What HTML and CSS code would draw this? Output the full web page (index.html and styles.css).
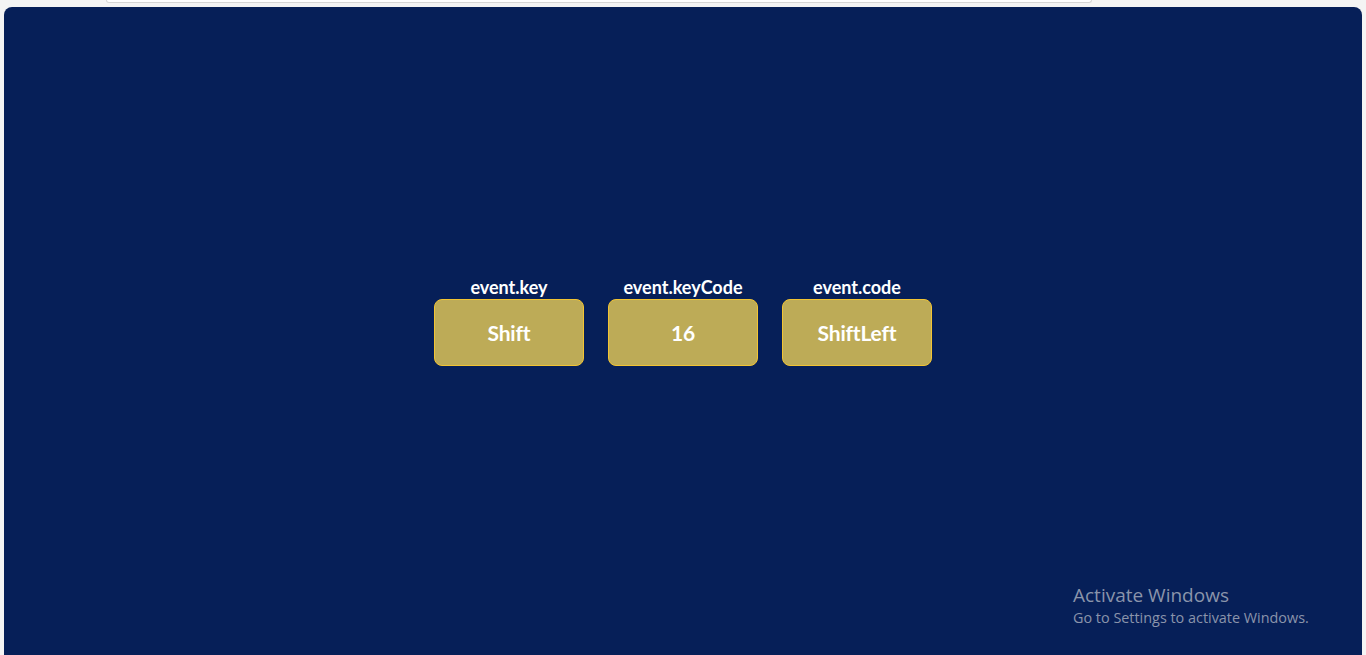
FILE: index.html
```html
<!DOCTYPE html>
<html>
<head>
<meta charset="utf-8">
<link rel="stylesheet" href="styles.css">
</head>
<body>
<div class="topbar"></div>
<main class="panel">
  <div class="keys">
    <div class="key">
      <div class="key-label">event.key</div>
      <div class="key-box">Shift</div>
    </div>
    <div class="key">
      <div class="key-label">event.keyCode</div>
      <div class="key-box">16</div>
    </div>
    <div class="key">
      <div class="key-label">event.code</div>
      <div class="key-box">ShiftLeft</div>
    </div>
  </div>
</main>
<div class="watermark">
  <div class="wm-title">Activate Windows</div>
  <div class="wm-sub">Go to Settings to activate Windows.</div>
</div>
</body>
</html>
```
FILE: styles.css
```css
html, body {
  margin: 0;
  padding: 0;
  height: 655px;
  overflow: hidden;
  background: #f4f4f4;
  font-family: "Lato", "Noto Sans", sans-serif;
}
.topbar {
  width: 984px;
  height: 2px;
  margin-left: 106px;
  background: #ffffff;
  border: 1px solid #d6d6d6;
  border-top: none;
  border-radius: 0 0 10px 10px;
}
.panel {
  margin: 4px 4px 0 4px;
  height: 680px;
  background: #061f58;
  border-radius: 8px 8px 0 0;
  display: flex;
  justify-content: center;
  padding-top: 268px;
  box-sizing: border-box;
}
.keys {
  display: flex;
  gap: 24px;
  align-items: flex-start;
}
.key {
  display: flex;
  flex-direction: column;
  align-items: center;
}
.key-label {
  color: #ffffff;
  font-weight: 700;
  font-size: 18px;
  line-height: 24px;
  letter-spacing: 0;
}
.key-box {
  width: 148px;
  height: 65px;
  background: #bdab57;
  border: 1px solid #f2c433;
  border-radius: 8px;
  display: flex;
  align-items: center;
  justify-content: center;
  color: #ffffff;
  font-weight: 700;
  font-size: 21px;
  letter-spacing: -0.2px;
}
.watermark {
  position: absolute;
  left: 1073px;
  top: 583px;
  color: #8a94ab;
  font-family: "Open Sans", "Noto Sans", sans-serif;
}
.wm-title {
  font-size: 19px;
  line-height: 24px;
}
.wm-sub {
  font-size: 14.4px;
  line-height: 22px;
}
```
